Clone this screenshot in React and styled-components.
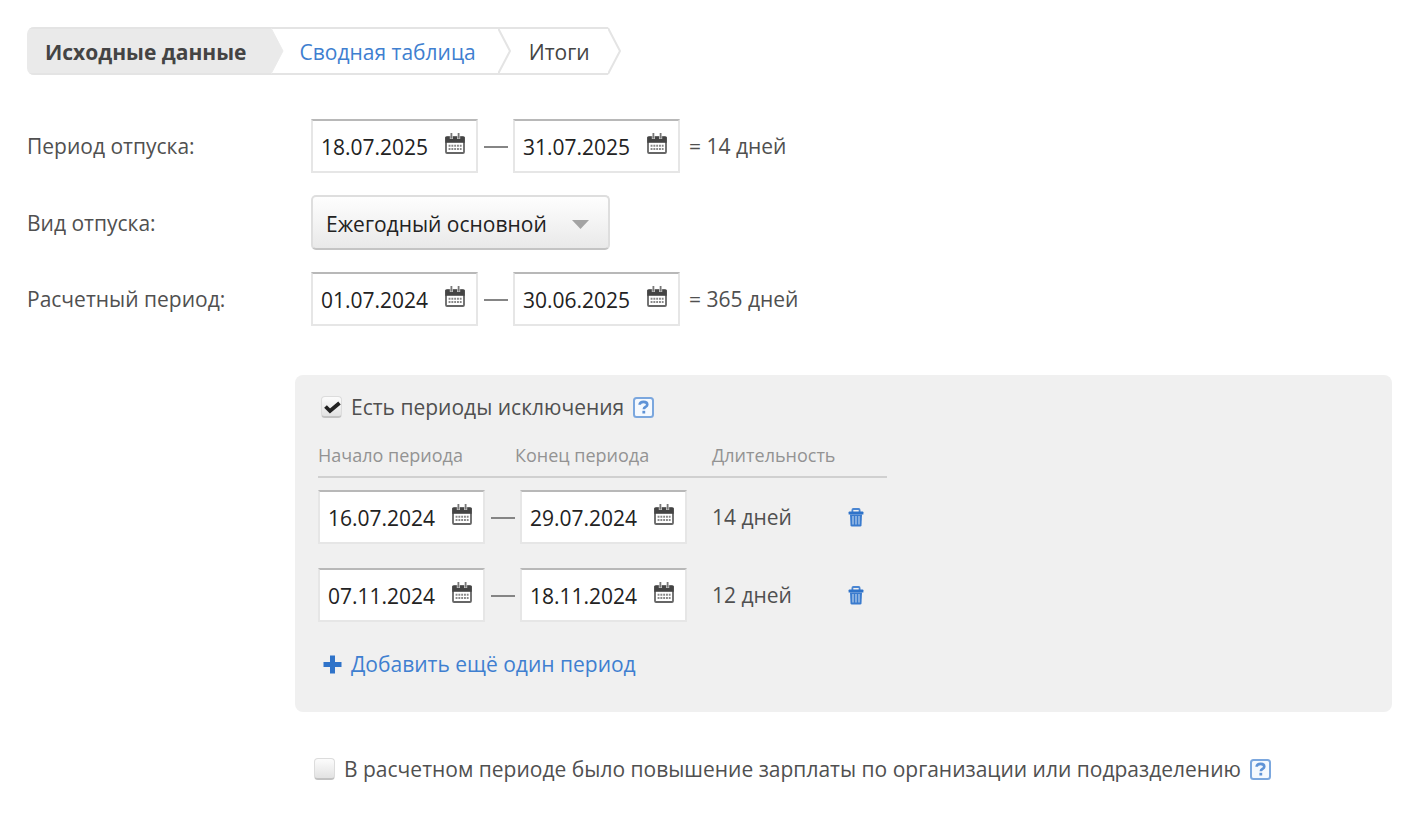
import * as React from 'react';
import styled, { createGlobalStyle } from 'styled-components';

const GlobalStyle = createGlobalStyle`
  * {
    box-sizing: border-box;
  }
  body {
    margin: 0;
    background: #fff;
    color: #505050;
    font-family: 'Open Sans', 'Noto Sans', sans-serif;
    font-size: 21px;
    line-height: 28px;
  }
  button, input, select {
    font: inherit;
  }
`;

const initialPeriods = [
  { id: 1, from: '16.07.2024', to: '29.07.2024', days: '14 дней' },
  { id: 2, from: '07.11.2024', to: '18.11.2024', days: '12 дней' },
];

const CalendarIcon = () => (
  <svg width="20" height="21" viewBox="0 0 20 21" aria-hidden="true">
    <rect x="1" y="4" width="18" height="16" rx="1" fill="#fff" stroke="#666" strokeWidth="1.8" />
    <path d="M0.3 4h19.4v5.8H0.3z" fill="#444" />
    <path d="M6.4 3v3M13.6 3v3" stroke="#ccc" strokeWidth="3.2" />
    <path d="M6.4 0v5.4M13.6 0v5.4" stroke="#777" strokeWidth="1.8" />
    <path d="M3.6 12.8h13M3.6 16h13" stroke="#888" strokeWidth="2" strokeDasharray="1.9 0.9" />
  </svg>
);

const TrashIcon = () => (
  <svg width="16" height="19" viewBox="0 0 16 19" aria-hidden="true">
    <path d="M4.4 4V2Q4.4 1 5.4 1h5.2q1 0 1 1v2" fill="none" stroke="#4a86d2" strokeWidth="1.8" />
    <path d="M0.6 4.2Q.6 3.4 1.4 3.400h13.200q.8 0 .8.8v2.400H.6z" fill="#2f73c9" />
    <path d="M2 6.400h12l-.5 10.800q-.1 1.400-1.400 1.400H3.900q-1.300 0-1.400-1.400z" fill="#3a7bce" />
    <path d="M5 8v8.4M8 8v8.4M11 8v8.4" stroke="#b7cfec" strokeWidth="1.2" />
  </svg>
);

const PlusIcon = () => (
  <svg width="19" height="19" viewBox="0 0 19 19" aria-hidden="true">
    <path d="M7 .5h5V7h6.5v5H12v6.5H7V12H.5V7H7z" fill="#2f73c9" />
  </svg>
);

const HelpIcon = () => (
  <svg width="21" height="21" viewBox="0 0 21 21" aria-hidden="true">
    <rect x="1" y="1" width="19" height="19" rx="2.5" fill="#f5f9fe" stroke="#7ba7de" strokeWidth="2" />
    <path
      d="M6.6 7.8C6.6 5.8 8.1 4.9 10.5 4.9s3.800 1 3.800 2.800c0 2.200-3.500 2.200-3.500 4.500"
      fill="none"
      stroke="#5f93d6"
      strokeWidth="2.6"
    />
    <rect x="9.4" y="13.8" width="2.8" height="2.7" fill="#5f93d6" />
  </svg>
);

const Chevron = ({ filled, last }) => (
  <svg width="13" height="48" viewBox="0 0 13 48" aria-hidden="true">
    {last ? null : <path d="M0 1h13M0 47h13" stroke="#e4e4e4" strokeWidth="2" />}
    <path
      d="M0 1L12 24L0 47"
      fill={filled ? '#eaeaea' : 'none'}
      stroke={filled ? '#eaeaea' : '#e4e4e4'}
      strokeWidth={filled ? 1 : 2}
    />
  </svg>
);

const DateField = ({ label, value }) => (
  <DateBox>
    <DateInput type="text" aria-label={label} defaultValue={value} />
    <CalendarButton type="button" aria-label="Открыть календарь">
      <CalendarIcon />
    </CalendarButton>
  </DateBox>
);

const App = () => {
  const [periods, setPeriods] = React.useState(initialPeriods);
  const [excluded, setExcluded] = React.useState(true);

  const handleAdd = () => {
    setPeriods([...periods, { id: Date.now(), from: '', to: '', days: '' }]);
  };

  const handleRemove = (id) => {
    setPeriods(periods.filter((period) => period.id !== id));
  };

  return (
    <Page>
      <GlobalStyle />
      <Steps>
        <Step $active>
          <StepText $active>Исходные данные</StepText>
          <Chevron filled />
        </Step>
        <Step>
          <StepLink href="#table">Сводная таблица</StepLink>
          <Chevron />
        </Step>
        <Step>
          <StepText>Итоги</StepText>
          <Chevron last />
        </Step>
      </Steps>

      <Form>
        <Row>
          <Caption>Период отпуска:</Caption>
          <Range>
            <DateField label="Начало отпуска" value="18.07.2025" />
            <Dash />
            <DateField label="Конец отпуска" value="31.07.2025" />
            <Total>= 14 дней</Total>
          </Range>
        </Row>
        <Row>
          <Caption as="label" htmlFor="kind">Вид отпуска:</Caption>
          <SelectWrap>
            <Select id="kind">
              <option>Ежегодный основной</option>
            </Select>
            <Arrow width="17" height="9" viewBox="0 0 17 9" aria-hidden="true">
              <path d="M0 0h17L8.5 9z" fill="#a3a3a3" />
            </Arrow>
          </SelectWrap>
        </Row>
        <Row>
          <Caption>Расчетный период:</Caption>
          <Range>
            <DateField label="Начало расчетного периода" value="01.07.2024" />
            <Dash />
            <DateField label="Конец расчетного периода" value="30.06.2025" />
            <Total>= 365 дней</Total>
          </Range>
        </Row>
      </Form>

      <Panel>
        <CheckRow $inset>
          <Checkbox
            id="excluded"
            type="checkbox"
            checked={excluded}
            onChange={() => setExcluded(!excluded)}
          />
          <label htmlFor="excluded">Есть периоды исключения</label>
          <IconButton type="button" aria-label="Справка">
            <HelpIcon />
          </IconButton>
        </CheckRow>
        <Table>
          <colgroup>
            <col width="197" />
            <col width="197" />
            <col width="136" />
            <col width="39" />
          </colgroup>
          <thead>
            <tr>
              <Th>Начало периода</Th>
              <Th>Конец периода</Th>
              <Th colSpan="2">Длительность</Th>
            </tr>
          </thead>
          <tbody>
            {periods.map((period) => (
              <tr key={period.id}>
                <Td>
                  <Range>
                    <DateField label="Начало периода" value={period.from} />
                    <Dash />
                  </Range>
                </Td>
                <Td $inset>
                  <DateField label="Конец периода" value={period.to} />
                </Td>
                <Td>{period.days}</Td>
                <Td>
                  <IconButton type="button" aria-label="Удалить" onClick={() => handleRemove(period.id)}>
                    <TrashIcon />
                  </IconButton>
                </Td>
              </tr>
            ))}
          </tbody>
        </Table>
        <AddButton type="button" onClick={handleAdd}>
          <PlusIcon />
          Добавить ещё один период
        </AddButton>
      </Panel>

      <Footer>
        <CheckRow>
          <Checkbox id="raise" type="checkbox" />
          <label htmlFor="raise">
            В расчетном периоде было повышение зарплаты по организации или подразделению
          </label>
          <IconButton type="button" aria-label="Справка">
            <HelpIcon />
          </IconButton>
        </CheckRow>
      </Footer>
    </Page>
  );
};

export default App;

const Page = styled.main`
  padding: 27px 26px 27px 27px;
`;

const Steps = styled.ol`
  display: flex;
  list-style: none;
  margin: 0;
  padding: 0;
`;

const Step = styled.li`
  display: flex;
  height: 48px;
  border-radius: ${({ $active }) => ($active ? '7px 0 0 7px' : '0')};
  overflow: hidden;
`;

const StepText = styled.span`
  display: flex;
  align-items: center;
  padding: ${({ $active }) => ($active ? '2px 24px 0 18px' : '2px 18px 0')};
  border: 2px solid #e4e4e4;
  border-width: 2px 0;
  color: #444;
  background: ${({ $active }) => ($active ? '#eaeaea' : '#fff')};
  font-weight: ${({ $active }) => ($active ? 700 : 400)};
`;

const StepLink = styled.a`
  display: flex;
  align-items: center;
  padding: 2px 22px 0 16px;
  border: 2px solid #e4e4e4;
  border-width: 2px 0;
  color: #3f7fd0;
  text-decoration: none;
`;

const Form = styled.div`
  display: flex;
  flex-direction: column;
  gap: 22px;
  margin-top: 44px;
`;

const Row = styled.div`
  display: grid;
  grid-template-columns: 284px 1fr;
  align-items: center;
`;

const Caption = styled.span`
  color: #505050;
`;

const Range = styled.div`
  display: flex;
  align-items: center;
`;

const DateBox = styled.div`
  display: flex;
  flex: none;
  width: 167px;
  height: 54px;
  background: #fff;
  border: 2px solid #e6e6e6;
  border-top-color: #b8b8b8;
`;

const DateInput = styled.input`
  flex: 1;
  min-width: 0;
  padding: 2px 0 0 8px;
  border: 0;
  background: none;
  color: #222;
  outline: none;
`;

const CalendarButton = styled.button`
  display: flex;
  align-items: center;
  padding: 0 11px 6px 0;
  border: 0;
  background: none;
  cursor: pointer;
`;

const Dash = styled.span`
  flex: none;
  width: 24px;
  height: 2px;
  margin: 2px 5px 0 6px;
  background: #858585;
`;

const Total = styled.span`
  margin-left: 9px;
`;

const SelectWrap = styled.div`
  position: relative;
  justify-self: start;
`;

const Select = styled.select`
  display: block;
  appearance: none;
  width: 299px;
  height: 55px;
  padding: 2px 50px 0 13px;
  border: 2px solid #dedede;
  border-bottom-color: #c4c4c4;
  border-radius: 5px;
  background: linear-gradient(#fefefe, #e9e9e9);
  color: #222;
`;

const Arrow = styled.svg`
  position: absolute;
  top: 25px;
  right: 21px;
  pointer-events: none;
`;

const Panel = styled.section`
  margin: 49px 0 0 268px;
  padding: 18px 23px 34px;
  border-radius: 8px;
  background: #f0f0f0;
`;

const CheckRow = styled.div`
  display: flex;
  align-items: center;
  gap: 9px;
  padding-left: ${({ $inset }) => ($inset ? '3px' : '0')};
`;

const Checkbox = styled.input`
  appearance: none;
  flex: none;
  width: 21px;
  height: 22px;
  margin: 0;
  border: 1px solid #dcdcdc;
  border-bottom: 2px solid #c2c2c2;
  border-radius: 4px;
  background: linear-gradient(#fcfcfc, #e2e2e2);
  &:checked {
    background: url("data:image/svg+xml,%3Csvg xmlns='http://www.w3.org/2000/svg' viewBox='0 0 19 19'%3E%3Cpath d='M3.500 9.500l4.500 4.500L17.500 6' fill='none' stroke='%23222' stroke-width='3.800'/%3E%3C/svg%3E"),
      linear-gradient(#fcfcfc, #e2e2e2);
  }
`;

const IconButton = styled.button`
  display: flex;
  padding: 0;
  border: 0;
  background: none;
  cursor: pointer;
`;

const Table = styled.table`
  width: 569px;
  margin-top: 20px;
  table-layout: fixed;
  border-collapse: collapse;
`;

const Th = styled.th`
  padding: 0 0 7px;
  border-bottom: 2px solid #d0d0d0;
  color: #939393;
  font-size: 18px;
  font-weight: 400;
  line-height: 28px;
  text-align: left;
`;

const Td = styled.td`
  padding: 12px 0 12px ${({ $inset }) => ($inset ? '5px' : '0')};
`;

const AddButton = styled.button`
  display: flex;
  align-items: center;
  gap: 9px;
  margin-top: 16px;
  padding: 0 0 0 5px;
  border: 0;
  background: none;
  color: #3f7fd0;
  cursor: pointer;
`;

const Footer = styled.div`
  margin: 43px 0 0 287px;
`;
